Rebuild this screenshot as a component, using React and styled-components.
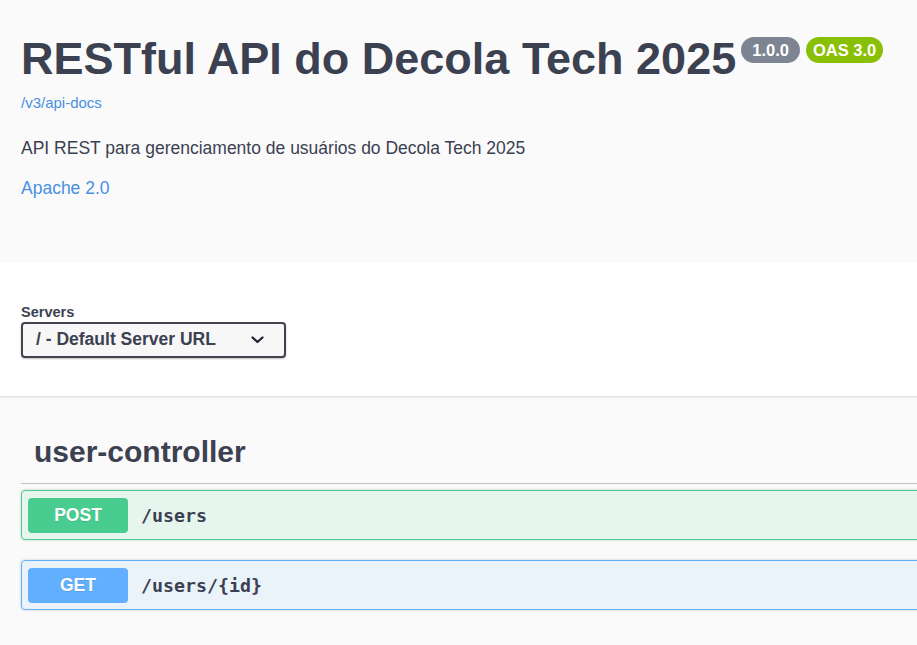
import styled, { createGlobalStyle } from 'styled-components';

const COLORS = {
  text: '#3b4151',
  link: '#4990e2',
  post: '#49cc90',
  get: '#61affe',
};

const GlobalStyle = createGlobalStyle`
  body {
    margin: 0;
    background: #fafafa;
    font-family: "Liberation Sans", Arial, sans-serif;
    color: ${COLORS.text};
    overflow: hidden;
  }
`;

const operations = [
  { method: 'POST', path: '/users', color: COLORS.post, tint: 'rgba(73, 204, 144, 0.1)' },
  { method: 'GET', path: '/users/{id}', color: COLORS.get, tint: 'rgba(97, 175, 254, 0.1)' },
];

export default function App() {
  return (
    <Page>
      <GlobalStyle />
      <Info>
        <TitleRow>
          <Title>RESTful API do Decola Tech 2025</Title>
          <Badge $bg="#7d8492" $pad={11}>1.0.0</Badge>
          <Badge $bg="#89bf04" $pad={7}>OAS 3.0</Badge>
        </TitleRow>
        <BaseUrl href="#">/v3/api-docs</BaseUrl>
        <Description>API REST para gerenciamento de usuários do Decola Tech 2025</Description>
        <License href="#">Apache 2.0</License>
      </Info>

      <SchemeContainer>
        <ServersTitle>Servers</ServersTitle>
        <Select>
          <span>/ - Default Server URL</span>
          <svg width="13" height="8" viewBox="0 0 13 8" fill="none">
            <path d="M1.5 1.5l5 4.5 5-4.5" stroke="#1f2330" strokeWidth="2.2" strokeLinecap="round" strokeLinejoin="round" />
          </svg>
        </Select>
      </SchemeContainer>

      <Operations>
        <TagHeading>user-controller</TagHeading>
        {operations.map((op) => (
          <OpBlock key={op.path} $color={op.color} $tint={op.tint}>
            <Method $color={op.color}>{op.method}</Method>
            <Path>{op.path}</Path>
          </OpBlock>
        ))}
      </Operations>
    </Page>
  );
}

const Page = styled.div`
  min-width: 1400px;
`;

const Info = styled.section`
  padding: 33px 21px 64px;
  display: flex;
  flex-direction: column;
  align-items: flex-start;
`;

const TitleRow = styled.div`
  display: flex;
  align-items: flex-start;
  gap: 6px;
`;

const Title = styled.h2`
  margin: 0 -1px 0 0;
  font-size: 45px;
  line-height: 51.75px;
  font-weight: 700;
  color: ${COLORS.text};
`;

const Badge = styled.span`
  margin-top: 4px;
  height: 26px;
  padding: 0 ${(p) => p.$pad}px;
  border-radius: 13px;
  background: ${(p) => p.$bg};
  color: #fff;
  font-size: 16.5px;
  font-weight: 700;
  display: flex;
  align-items: center;
`;

const BaseUrl = styled.a`
  margin-top: 9px;
  font-size: 15px;
  line-height: 17.25px;
  color: ${COLORS.link};
  text-decoration: none;
`;

const Description = styled.p`
  margin: 27px 0 0;
  font-size: 17.5px;
  line-height: 20.1px;
`;

const License = styled.a`
  margin-top: 20px;
  font-size: 17.5px;
  line-height: 20.1px;
  color: ${COLORS.link};
  text-decoration: none;
`;

const SchemeContainer = styled.section`
  background: #fff;
  box-shadow: 0 1px 2px 0 rgba(0, 0, 0, 0.15);
  padding: 42px 21px 38px;
  display: flex;
  flex-direction: column;
  align-items: flex-start;
  gap: 1px;
`;

const ServersTitle = styled.span`
  font-size: 14.5px;
  line-height: 16.7px;
  font-weight: 700;
`;

const Select = styled.div`
  box-sizing: border-box;
  width: 265px;
  height: 36px;
  padding: 0 20px 0 13px;
  border: 2px solid #41444e;
  border-radius: 4px;
  background: #f7f7f7;
  box-shadow: 0 1px 2px 0 rgba(0, 0, 0, 0.25);
  display: flex;
  align-items: center;
  justify-content: space-between;
  font-size: 17.5px;
  font-weight: 700;
  color: ${COLORS.text};
`;

const Operations = styled.section`
  padding: 27px 0 0 21px;
`;

const TagHeading = styled.h3`
  margin: 0 0 6px;
  padding: 12px 0 14px 13px;
  border-bottom: 1px solid rgba(59, 65, 81, 0.3);
  font-size: 30px;
  line-height: 34.5px;
  font-weight: 700;
  color: ${COLORS.text};
`;

const OpBlock = styled.div`
  margin-bottom: 20px;
  padding: 7px 6px 6px;
  border: 1px solid ${(p) => p.$color};
  border-radius: 4px;
  background: ${(p) => p.$tint};
  box-shadow: 0 0 3px rgba(0, 0, 0, 0.19);
  display: flex;
  align-items: center;
`;

const Method = styled.span`
  width: 100px;
  height: 35px;
  border-radius: 4px;
  background: ${(p) => p.$color};
  color: #fff;
  font-size: 17.5px;
  font-weight: 700;
  text-shadow: 0 1px 0 rgba(0, 0, 0, 0.1);
  display: flex;
  align-items: center;
  justify-content: center;
`;

const Path = styled.span`
  padding: 0 13px;
  font-family: "DejaVu Sans Mono", "Liberation Mono", monospace;
  font-size: 18.3px;
  font-weight: 700;
  color: ${COLORS.text};
`;
